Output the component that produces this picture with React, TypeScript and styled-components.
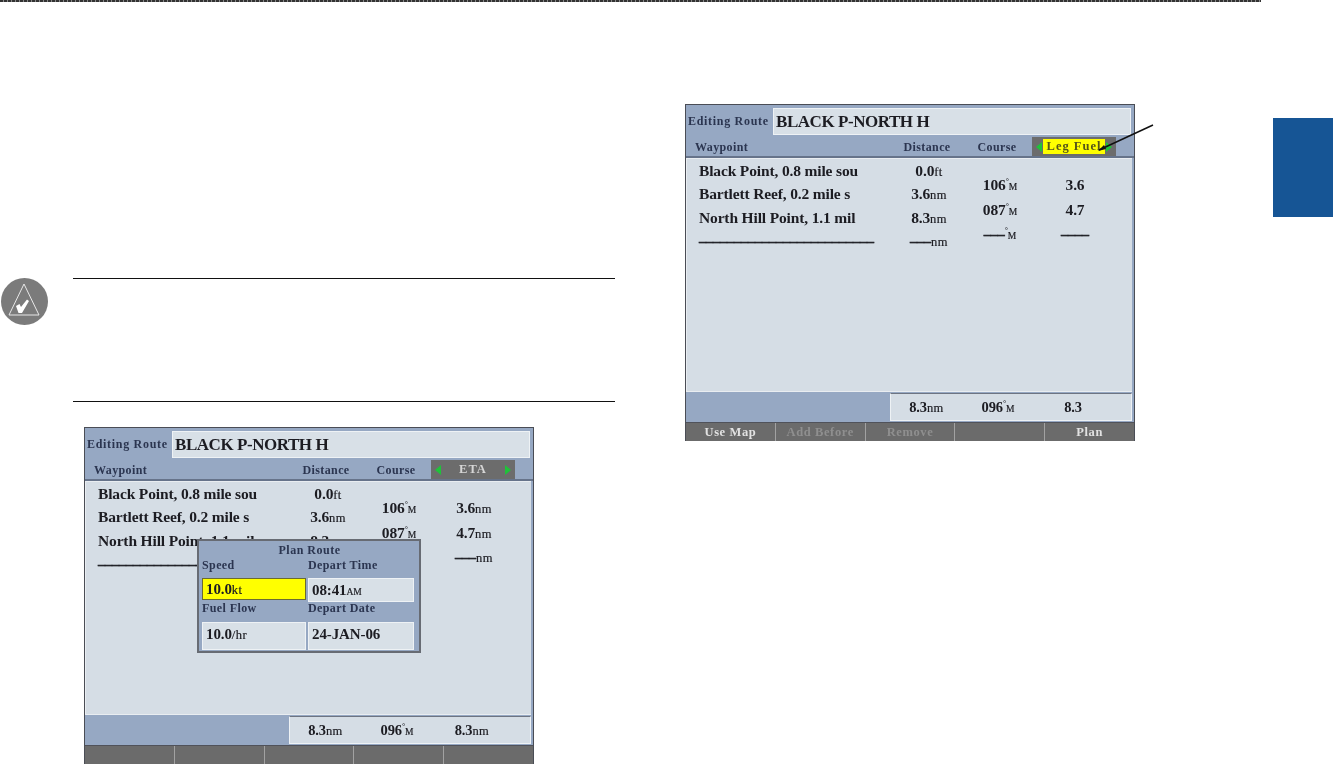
import React from 'react'
import styled, { createGlobalStyle } from 'styled-components'

type Stop = { name: string, dist: string, unit: string }
type Reading = { main: string, unit?: string, deg?: boolean }

const GlobalStyle = createGlobalStyle`
  html, body {
    margin: 0;
    padding: 0;
    background: #fff;
    font-family: "Liberation Serif", serif;
  }
`

const Page = styled.div`
  width: 1333px;
  height: 764px;
  overflow: hidden;
  background: #fff;
`

const TopRule = styled.div`
  width: 1261px;
  height: 2px;
  background: repeating-linear-gradient(90deg, #333 0 3px, #888 3px 4px);
`

const Spread = styled.div`
  display: flex;
  height: 762px;
`

const LeftColumn = styled.div`
  width: 685px;
  padding: 276px 0 0 1px;
  box-sizing: border-box;
`

const RightColumn = styled.div`
  width: 588px;
  padding-top: 102px;
`

const EdgeTab = styled.div`
  width: 60px;
  height: 99px;
  margin-top: 116px;
  background: #165595;
`

const Note = styled.div`
  display: flex;
  gap: 25px;
  margin-bottom: 25px;
`

const NoteBody = styled.div`
  width: 542px;
  height: 122px;
  border-top: 1px solid #111;
  border-bottom: 1px solid #111;
`

const ScreenSlot = styled.div`
  position: relative;
  width: 450px;
  margin-left: ${p => p.$left}px;
`

const Screen = styled.div`
  width: 450px;
  height: 337px;
  display: flex;
  flex-direction: column;
  box-sizing: border-box;
  border: 1px solid #4a4d55;
  border-bottom: 0;
  background: #96a8c3;
  filter: blur(${p => p.$blur}px);
  color: #1c1c22;
`

const TitleRow = styled.div`
  display: flex;
  align-items: flex-end;
  height: 30px;
  padding-left: 2px;
`

const TitleLabel = styled.div`
  width: 85px;
  padding-bottom: 6px;
  font-size: 12px;
  font-weight: bold;
  letter-spacing: 0.7px;
  color: #2b3550;
  white-space: nowrap;
`

const TitleField = styled.div`
  width: 358px;
  height: 27px;
  box-sizing: border-box;
  padding-left: 2px;
  background: #d8e0e7;
  border: 1px solid #eef2f5;
  font-size: 17px;
  font-weight: bold;
  line-height: 25px;
  letter-spacing: -0.45px;
  white-space: nowrap;
`

const HeaderRow = styled.div`
  display: grid;
  grid-template-columns: 197px 70px 70px 84px;
  align-items: center;
  height: 23px;
  padding-left: 9px;
  box-sizing: border-box;
  border-bottom: 2px solid #66738a;
  font-size: 12px;
  font-weight: bold;
  letter-spacing: 0.4px;
  color: #2b3550;
`

const HeaderCell = styled.div`
  padding-top: 3px;
  text-align: ${p => (p.$center ? 'center' : 'left')};
  white-space: nowrap;
`

const Selector = styled.div`
  display: flex;
  align-items: center;
  justify-content: space-between;
  align-self: end;
  height: 19px;
  padding: 0 4px;
  box-sizing: border-box;
  background: #6c6c6c;
`

const SelectorLabel = styled.div`
  flex: 1;
  margin: 0 1px;
  height: 15px;
  line-height: 15px;
  text-align: center;
  white-space: nowrap;
  font-size: 12.5px;
  letter-spacing: 1px;
  background: ${p => (p.$active ? '#ffff00' : 'transparent')};
  color: ${p => (p.$active ? '#55551a' : '#d6d6d6')};
`

const Chevron = styled.span`
  flex-shrink: 0;
  width: 0;
  height: 0;
  border-top: 5px solid transparent;
  border-bottom: 5px solid transparent;
  ${p => (p.$dir === 'left' ? 'border-right: 6px solid #1fc23a;' : 'border-left: 6px solid #1fc23a;')}
`

const ListArea = styled.div`
  flex: 1;
  display: grid;
  grid-template-columns: 195px 70px 72px 78px;
  padding-left: 12px;
  margin-right: 2px;
  background: #d5dde5;
  border: 1px solid #e9edf1;
  border-width: 1px 0 1px 1px;
  box-sizing: border-box;
`

const ListColumn = styled.div`
  display: flex;
  flex-direction: column;
  align-items: ${p => (p.$center ? 'center' : 'flex-start')};
  padding-top: ${p => p.$top}px;
`

const ListLine = styled.div`
  height: ${p => p.$step}px;
  line-height: ${p => p.$step}px;
  font-weight: bold;
  font-size: 15.5px;
  letter-spacing: -0.15px;
  white-space: nowrap;
`

const Dashes = styled.span`
  font-size: 14px;
  letter-spacing: 0;
  -webkit-text-stroke: 0.5px #1c1c22;
`

const Unit = styled.span`
  font-size: ${p => (p.$small ? 9.5 : 12.5)}px;
  font-weight: normal;
  letter-spacing: ${p => (p.$small ? 0 : 0.4)}px;
  -webkit-text-stroke: 0.2px #1c1c22;
`

const Degree = styled.sup`
  font-size: 8px;
  line-height: 0;
`

const SummaryRow = styled.div`
  display: flex;
  height: 30px;
`

const SummarySpacer = styled.div`
  width: 204px;
`

const SummaryCells = styled.div`
  flex: 1;
  display: grid;
  grid-template-columns: 71px 72px 78px;
  align-items: center;
  margin: 1px 2px 1px 0;
  box-sizing: border-box;
  background: #d5dde5;
  border: 1px solid #eef2f5;
  border-top-color: #6d7482;
  font-size: 14.5px;
  font-weight: bold;
  letter-spacing: -0.15px;
`

const SummaryCell = styled.div`
  text-align: center;
  white-space: nowrap;
`

const SoftKeys = styled.div`
  display: flex;
  height: 19px;
  background: #6b6b6b;
  border-top: 1px solid #50525a;
  box-sizing: border-box;
`

const SoftKey = styled.div`
  flex: 1;
  text-align: center;
  line-height: 18px;
  font-size: 12.5px;
  font-weight: bold;
  letter-spacing: 0.6px;
  color: ${p => (p.$dim ? '#8f8f8f' : '#e2e2e2')};
  border-left: ${p => (p.$first ? '0' : '1px solid #a2a2a2')};
`

const PlanDialog = styled.div`
  position: absolute;
  left: 113px;
  top: 112px;
  width: 224px;
  height: 114px;
  box-sizing: border-box;
  padding: 0 2px 2px 3px;
  background: #96a8c3;
  border: 2px solid #676b73;
  color: #1c1c22;
  filter: blur(0.6px);
`

const DialogTitle = styled.div`
  height: 18px;
  line-height: 18px;
  text-align: center;
  font-size: 12px;
  font-weight: bold;
  letter-spacing: 0.5px;
  color: #2b3550;
`

const DialogGrid = styled.div`
  display: grid;
  grid-template-columns: 106px 108px;
  grid-template-rows: 19px 24px 20px 28px;
`

const DialogLabel = styled.div`
  line-height: 13px;
  font-size: 12px;
  font-weight: bold;
  letter-spacing: 0.4px;
  color: #2b3550;
`

const DialogField = styled.div`
  display: flex;
  align-items: baseline;
  box-sizing: border-box;
  margin-right: 2px;
  margin-bottom: ${p => (p.$active ? 2 : 0)}px;
  padding-left: 3px;
  font-size: 15px;
  font-weight: bold;
  letter-spacing: -0.1px;
  line-height: ${p => (p.$active ? 20 : 22)}px;
  white-space: nowrap;
  background: ${p => (p.$active ? '#ffff00' : '#d8e0e7')};
  border: 1px solid ${p => (p.$active ? '#6b6b30' : '#eef2f5')};
`

const Callout = styled.svg`
  position: absolute;
  left: 405px;
  top: 15px;
  width: 70px;
  height: 40px;
`

function NoteIcon() {
  return (
    <svg width="47" height="47" viewBox="0 0 47 47">
      <circle cx="23.5" cy="23.5" r="23.5" fill="#7b7b7b" />
      <path d="M23 6 L38 37 L8 37 Z" fill="none" stroke="#e8e8e8" strokeWidth="1" />
      <path d="M15 28 L18.5 26 L20 29 L26 21.5 L28 23 L21 35 L17.5 35 Z" fill="#fff" />
    </svg>
  )
}

const smallUnit = (unit: string) => unit === unit.toUpperCase()

function Figure({ text }: { text: string }) {
  return text.startsWith('–') ? <Dashes>{text}</Dashes> : <>{text}</>
}

function Read({ value }: { value: Reading }) {
  return (
    <>
      <Figure text={value.main} />
      {value.deg && <Degree>°</Degree>}
      {value.unit && <Unit $small={smallUnit(value.unit)}>{value.unit}</Unit>}
    </>
  )
}

function RouteScreen(props: {
  blur: number,
  selector: string,
  active?: boolean,
  stops: Stop[],
  course: Reading[],
  values: Reading[],
  summary: Reading[],
  keys: { text: string, dim?: boolean }[],
}) {
  return (
    <Screen $blur={props.blur}>
      <TitleRow>
        <TitleLabel>Editing Route</TitleLabel>
        <TitleField>BLACK P-NORTH H</TitleField>
      </TitleRow>
      <HeaderRow>
        <HeaderCell>Waypoint</HeaderCell>
        <HeaderCell $center>Distance</HeaderCell>
        <HeaderCell $center>Course</HeaderCell>
        <Selector>
          <Chevron $dir="left" />
          <SelectorLabel $active={props.active}>{props.selector}</SelectorLabel>
          <Chevron $dir="right" />
        </Selector>
      </HeaderRow>
      <ListArea>
        <ListColumn $top={0}>
          {props.stops.map((s, i) => (
            <ListLine key={i} $step={23.4}>
              <Figure text={s.name} />
            </ListLine>
          ))}
        </ListColumn>
        <ListColumn $center $top={0}>
          {props.stops.map((s, i) => (
            <ListLine key={i} $step={23.4}>
              <Figure text={s.dist} />
              <Unit>{s.unit}</Unit>
            </ListLine>
          ))}
        </ListColumn>
        <ListColumn $center $top={14}>
          {props.course.map((c, i) => (
            <ListLine key={i} $step={24.5}>
              <Read value={c} />
            </ListLine>
          ))}
        </ListColumn>
        <ListColumn $center $top={14}>
          {props.values.map((v, i) => (
            <ListLine key={i} $step={24.5}>
              <Read value={v} />
            </ListLine>
          ))}
        </ListColumn>
      </ListArea>
      <SummaryRow>
        <SummarySpacer />
        <SummaryCells>
          {props.summary.map((v, i) => (
            <SummaryCell key={i}>
              <Read value={v} />
            </SummaryCell>
          ))}
        </SummaryCells>
      </SummaryRow>
      <SoftKeys>
        {props.keys.map((k, i) => (
          <SoftKey key={i} $first={i === 0} $dim={k.dim}>
            {k.text}
          </SoftKey>
        ))}
      </SoftKeys>
    </Screen>
  )
}

const stops: Stop[] = [
  { name: 'Black Point, 0.8 mile sou', dist: '0.0', unit: 'ft' },
  { name: 'Bartlett Reef, 0.2 mile s', dist: '3.6', unit: 'nm' },
  { name: 'North Hill Point, 1.1 mil', dist: '8.3', unit: 'nm' },
  { name: '–––––––––––––––––––––––––', dist: '–––', unit: 'nm' },
]

const course: Reading[] = [
  { main: '106', deg: true, unit: 'M' },
  { main: '087', deg: true, unit: 'M' },
  { main: '–––', deg: true, unit: 'M' },
]

export default function App() {
  return (
    <Page>
      <GlobalStyle />
      <TopRule />
      <Spread>
        <LeftColumn>
          <Note>
            <NoteIcon />
            <NoteBody />
          </Note>
          <ScreenSlot $left={83}>
            <RouteScreen
              blur={0.7}
              selector="ETA"
              stops={stops}
              course={course.slice(0, 2)}
              values={[
                { main: '3.6', unit: 'nm' },
                { main: '4.7', unit: 'nm' },
                { main: '–––', unit: 'nm' },
              ]}
              summary={[
                { main: '8.3', unit: 'nm' },
                { main: '096', deg: true, unit: 'M' },
                { main: '8.3', unit: 'nm' },
              ]}
              keys={[{ text: '' }, { text: '' }, { text: '' }, { text: '' }, { text: '' }]}
            />
            <PlanDialog>
              <DialogTitle>Plan Route</DialogTitle>
              <DialogGrid>
                <DialogLabel>Speed</DialogLabel>
                <DialogLabel>Depart Time</DialogLabel>
                <DialogField $active>
                  10.0<Unit>kt</Unit>
                </DialogField>
                <DialogField>
                  08:41<Unit $small>AM</Unit>
                </DialogField>
                <DialogLabel>Fuel Flow</DialogLabel>
                <DialogLabel>Depart Date</DialogLabel>
                <DialogField>
                  10.0<Unit>/hr</Unit>
                </DialogField>
                <DialogField>24-JAN-06</DialogField>
              </DialogGrid>
            </PlanDialog>
          </ScreenSlot>
        </LeftColumn>
        <RightColumn>
          <ScreenSlot $left={0}>
            <RouteScreen
              blur={0.5}
              selector="Leg Fuel"
              active
              stops={stops}
              course={course}
              values={[{ main: '3.6' }, { main: '4.7' }, { main: '––––' }]}
              summary={[
                { main: '8.3', unit: 'nm' },
                { main: '096', deg: true, unit: 'M' },
                { main: '8.3' },
              ]}
              keys={[
                { text: 'Use Map' },
                { text: 'Add Before', dim: true },
                { text: 'Remove', dim: true },
                { text: '' },
                { text: 'Plan' },
              ]}
            />
            <Callout viewBox="0 0 70 40">
              <path d="M63 6 L9 31" stroke="#111" strokeWidth="1.5" fill="none" />
              <path d="M8 32 L14 26 L16 30 Z" fill="#111" />
            </Callout>
          </ScreenSlot>
        </RightColumn>
        <EdgeTab />
      </Spread>
    </Page>
  )
}
